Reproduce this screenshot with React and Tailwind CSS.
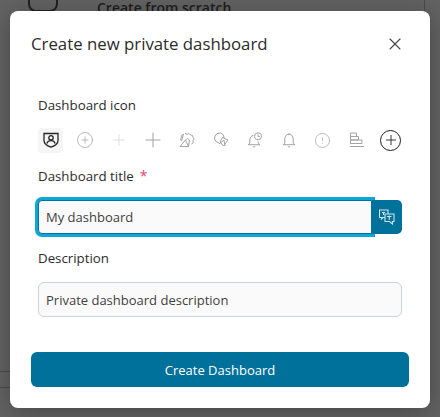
import React from 'react'
import { X, Plus, CirclePlus, CircleAlert } from 'lucide-react'

const font = "font-['Open_Sans','Noto_Sans',sans-serif]"

function ShieldUser() {
  return (
    <svg width="16" height="16" viewBox="0 0 16 16" fill="none" stroke="#262626" strokeWidth="1.300">
      <path d="M1 1.500h14v7c0 3.300-3.500 5.500-7 6.700-3.500-1.200-7-3.400-7-6.700z" />
      <circle cx="8" cy="5.800" r="2.200" />
      <path d="M3.800 11.500c.6-2 2.300-2.900 4.200-2.900s3.600.9 4.200 2.900" />
    </svg>
  )
}

function SealMegaphone() {
  return (
    <svg width="16" height="16" viewBox="0 0 16 16" fill="none" stroke="#a3a3a3" strokeWidth="1">
      <path d="M6 1.500l2 .8 2-.8 1.500 1.500 2 .3.500 2 1.200 1.700-1.200 1.800.2 2-1.700 1.200M2.500 9l-1-2 1-1.800.2-2 1.800-.8z" />
      <path d="M1 14.500L6.500 8l3 6.500z" />
      <path d="M6.500 8l2-1.500 2 1.500-1 6.500" />
    </svg>
  )
}

function SealTriangle() {
  return (
    <svg width="16" height="16" viewBox="0 0 16 16" fill="none" stroke="#a3a3a3" strokeWidth="1">
      <path d="M2 4l2-2.500 3.500-.5 3 2 .5 3" />
      <path d="M2 4l-.5 3 2 3 2.500 1" />
      <path d="M15 8l-5.500-2.500L7 10l3.500 4z" />
      <path d="M6 12l5-4 1 6" />
    </svg>
  )
}

function BellClock() {
  return (
    <svg width="16" height="16" viewBox="0 0 16 16" fill="none" stroke="#a3a3a3" strokeWidth="1">
      <path d="M6.500 3.300C4 3.800 2.800 5.800 2.800 8v3.500L1 12.700h12l-1.800-1.200V9.500" />
      <circle cx="11" cy="4.300" r="3.500" />
      <path d="M11 2.300v2.200h1.800M5.800 14.800h2.400" />
    </svg>
  )
}

function BellPlain() {
  return (
    <svg width="16" height="16" viewBox="0 0 16 16" fill="none" stroke="#a3a3a3" strokeWidth="1">
      <path d="M8 1v1.300M8 2.300C5.300 2.300 3.800 4.300 3.800 7v4.500L2 12.700h12l-1.800-1.200V7c0-2.700-1.500-4.700-4.200-4.700z" />
      <path d="M6.800 14.800h2.400" />
    </svg>
  )
}

function BarsIcon() {
  return (
    <svg width="16" height="16" viewBox="0 0 16 16" fill="none" stroke="#a3a3a3" strokeWidth="1">
      <path d="M1.500 1h6v3.500h-6zM1.500 4.500h8V8h-8zM1.500 8h11.500v3.500H1.500zM1.500 1v10.500M1 14.500h14" />
    </svg>
  )
}

function TranslateIcon() {
  return (
    <svg width="16" height="16" viewBox="0 0 16 16" fill="none" stroke="#cfe3ec" strokeWidth="1.100">
      <path d="M.5 1h8.500v7.500H4L2.500 10V8.500h-2z" />
      <path d="M6 5h9v7.500h-1.500V15l-3-2.500H6z" fill="#00719a" />
      <path d="M3 3.500h3M4.500 3v3M8 7.500h4.500M10.300 6.500v4.500" />
    </svg>
  )
}

function Label({ children }) {
  return <div className="text-[13.300px] leading-5 font-medium text-[#2b2b2b]">{children}</div>
}

function IconCell({ children }) {
  return <div className="flex h-[25px] w-[25px] shrink-0 items-center justify-center">{children}</div>
}

export default function App() {
  return (
    <div className={`${font} relative h-[417px] w-[440px] overflow-hidden bg-[#636363]`}>
      <div className="h-[372px] w-[425px] border-r border-b border-[#4a4a4a]">
        <div className="flex items-start gap-[39px] pl-[28px]">
          <div className="-mt-[12px] h-[24px] w-[30px] rounded-[8px] border-2 border-[#222222]"></div>
          <div className="-mt-[2px] text-[14px] leading-5 font-semibold text-[#1e1e1e]">Create from scratch</div>
        </div>
      </div>
      <div className="h-[16px] w-[425px] border-b border-[#4a4a4a]"></div>

      <div className="absolute left-[10px] top-[11px] flex h-[397px] w-[420px] flex-col rounded-[8px] bg-white px-[21px] shadow-[0_4px_24px_rgba(0,0,0,0.3)]">
        <div className="flex items-center justify-between pt-[19px]">
          <h2 className="text-[16.800px] leading-[28px] font-medium text-[#2b2b2b]">Create new private dashboard</h2>
          <X size={20} strokeWidth={1.300} className="mr-[4px] text-[#444444]" />
        </div>

        <div className="mt-[37px] pr-[7px] pl-[7px]">
          <Label>Dashboard icon</Label>
          <div className="mt-[12px] flex h-[26px] items-center gap-[9px]">
            <div className="flex h-[25px] w-[25px] shrink-0 items-center justify-center rounded-[4px] bg-[#f5f5f5]">
              <ShieldUser />
            </div>
            <IconCell><CirclePlus size={18} strokeWidth={1} className="text-[#a3a3a3]" /></IconCell>
            <IconCell><Plus size={18} strokeWidth={1} className="text-[#d4d4d4]" /></IconCell>
            <IconCell><Plus size={24} strokeWidth={1} className="text-[#a3a3a3]" /></IconCell>
            <IconCell><SealMegaphone /></IconCell>
            <IconCell><SealTriangle /></IconCell>
            <IconCell><BellClock /></IconCell>
            <IconCell><BellPlain /></IconCell>
            <IconCell><CircleAlert size={17} strokeWidth={1} className="text-[#a3a3a3]" /></IconCell>
            <IconCell><BarsIcon /></IconCell>
            <div className="ml-[2px] flex h-[21px] w-[21px] shrink-0 items-center justify-center rounded-full border-[1.500px] border-[#1c1c1c]">
              <Plus size={16} strokeWidth={1.300} className="text-[#1c1c1c]" />
            </div>
          </div>

          <div className="mt-[13px] flex items-center gap-[6px]">
            <Label>Dashboard title</Label>
            <span className="text-[14px] leading-5 text-[#e8436f]">*</span>
          </div>
          <div className="mt-[14px] flex h-[34px] items-stretch">
            <div className="flex flex-1 items-center rounded-l-[4px] border border-[#00719a] bg-[#fafafa] pt-[2px] pl-[7px] text-[13px] text-[#3f3f3f] ring-[3px] ring-[#0ea5d8]">
              My dashboard
            </div>
            <div className="relative flex w-[30px] items-center justify-center rounded-r-[5px] bg-[#00719a]">
              <TranslateIcon />
            </div>
          </div>

          <div className="mt-[14px]"><Label>Description</Label></div>
          <div className="mt-[14px] flex h-[35px] items-center rounded-[6px] border border-[#c8d5da] bg-[#fafafa] pt-[2px] pl-[7px] text-[13px] text-[#3f3f3f]">
            Private dashboard description
          </div>
        </div>

        <button className="mt-[35px] h-[35px] w-full rounded-[6px] bg-[#00719a] pt-[2px] text-[13px] text-white">
          Create Dashboard
        </button>
      </div>
    </div>
  )
}
